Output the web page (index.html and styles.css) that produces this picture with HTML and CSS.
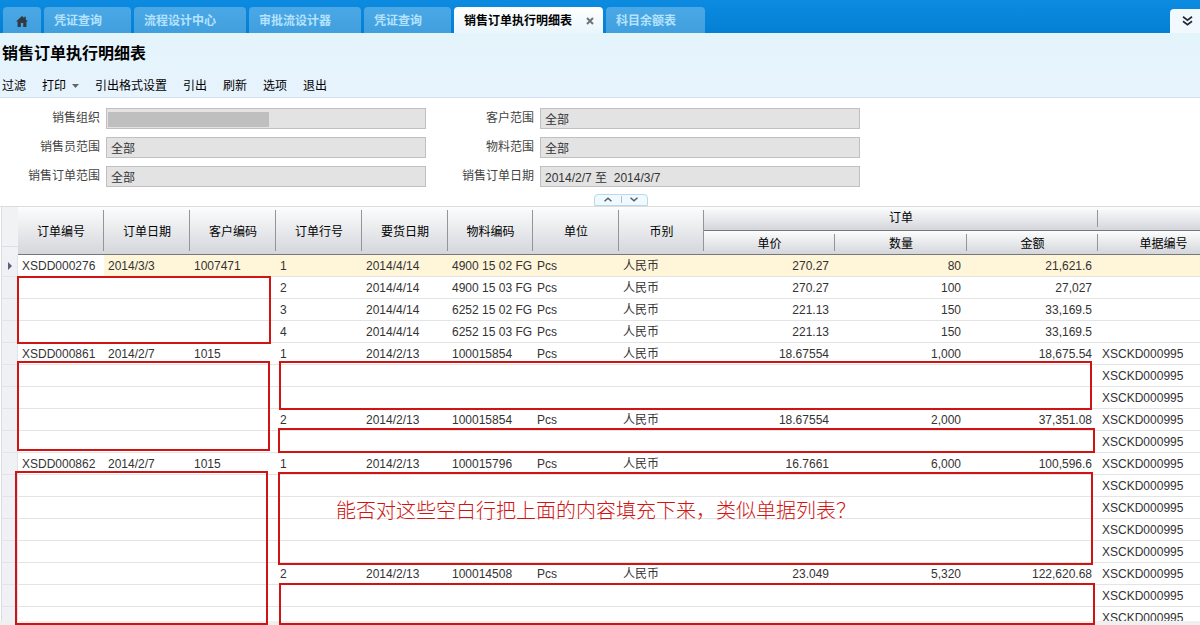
FILE: index.html
```html
<!DOCTYPE html>
<html lang="zh-CN">
<head>
<meta charset="utf-8">
<title>销售订单执行明细表</title>
<link rel="stylesheet" href="styles.css">
</head>
<body>
<nav class="tabs">
  <button class="tab tab-home" aria-label="首页"><svg width="12" height="11" viewBox="0 0 12 11"><path fill="#2f3a45" d="M6 0 0 5.6h1.6V11h3.2V7h2.4v4h3.2V5.6H12L9.8 3.5V.8H8.2V2z"/></svg></button>
  <button class="tab">凭证查询</button>
  <button class="tab tab-wide">流程设计中心</button>
  <button class="tab tab-wide">审批流设计器</button>
  <button class="tab">凭证查询</button>
  <button class="tab tab-active">销售订单执行明细表<svg width="8" height="8" viewBox="0 0 8 8"><path d="M1 1l6 6M7 1l-6 6" stroke="#6e7378" stroke-width="2"/></svg></button>
  <button class="tab">科目余额表</button>
  <button class="expand" aria-label="展开"><svg width="11" height="10" viewBox="0 0 11 10"><path d="M1 .8l4.500 3.400L10 .8M1 5.300l4.500 3.400L10 5.300" fill="none" stroke="#222b33" stroke-width="1.700"/></svg></button>
</nav>
<header class="head">
  <h1 class="title">销售订单执行明细表</h1>
  <div class="toolbar">
    <button class="tool">过滤</button>
    <button class="tool">打印<svg class="caret" width="7" height="4" viewBox="0 0 7 4"><path fill="#666" d="M0 0h7L3.500 4z"/></svg></button>
    <button class="tool">引出格式设置</button>
    <button class="tool">引出</button>
    <button class="tool">刷新</button>
    <button class="tool">选项</button>
    <button class="tool">退出</button>
  </div>
</header>
<form class="filters">
  <label class="label" for="org">销售组织</label>
  <div class="masked"><input class="field" id="org" readonly><span class="mask"></span></div>
  <label class="label" for="customer">客户范围</label>
  <input class="field" id="customer" value="全部" readonly>
  <label class="label" for="seller">销售员范围</label>
  <input class="field" id="seller" value="全部" readonly>
  <label class="label" for="material">物料范围</label>
  <input class="field" id="material" value="全部" readonly>
  <label class="label" for="order">销售订单范围</label>
  <input class="field" id="order" value="全部" readonly>
  <label class="label" for="date">销售订单日期</label>
  <input class="field" id="date" value="2014/2/7 至  2014/3/7" readonly>
</form>
<div class="splitter">
  <div class="handle">
    <button class="fold" aria-label="收起"><svg width="8" height="5" viewBox="0 0 8 5"><path d="M.5 4.300 4 1.200l3.500 3.100" fill="none" stroke="#555d66" stroke-width="1.500"/></svg></button>
    <button class="fold" aria-label="展开"><svg width="8" height="5" viewBox="0 0 8 5"><path d="M.5.700 4 3.800 7.500.7" fill="none" stroke="#555d66" stroke-width="1.500"/></svg></button>
  </div>
</div>
<main class="sheet">
  <div class="viewport">
    <table class="grid">
      <colgroup>
        <col class="w-gutter"><col class="w-std"><col class="w-std"><col class="w-std"><col class="w-std"><col class="w-std"><col class="w-code"><col class="w-std"><col class="w-code"><col class="w-num"><col class="w-qty"><col class="w-num"><col class="w-num">
      </colgroup>
      <thead>
        <tr>
          <th class="corner" rowspan="2"></th>
          <th rowspan="2">订单编号</th><th rowspan="2">订单日期</th><th rowspan="2">客户编码</th><th rowspan="2">订单行号</th><th rowspan="2">要货日期</th><th rowspan="2">物料编码</th><th rowspan="2">单位</th><th rowspan="2">币别</th>
          <th class="group" colspan="3">订单</th><th class="group"></th>
        </tr>
        <tr><th>单价</th><th>数量</th><th>金额</th><th>单据编号</th></tr>
      </thead>
      <tbody>
        <tr class="current"><td class="gutter"><svg width="4" height="8" viewBox="0 0 4 8"><path fill="#5b5f7d" d="M0 0l4 4-4 4z"/></svg></td><td class="focus">XSDD000276</td><td>2014/3/3</td><td>1007471</td><td>1</td><td>2014/4/14</td><td>4900 15 02 FG</td><td>Pcs</td><td>人民币</td><td class="num">270.27</td><td class="num">80</td><td class="num">21,621.6</td><td></td></tr>
        <tr><td class="gutter"></td><td></td><td></td><td></td><td>2</td><td>2014/4/14</td><td>4900 15 03 FG</td><td>Pcs</td><td>人民币</td><td class="num">270.27</td><td class="num">100</td><td class="num">27,027</td><td></td></tr>
        <tr><td class="gutter"></td><td></td><td></td><td></td><td>3</td><td>2014/4/14</td><td>6252 15 02 FG</td><td>Pcs</td><td>人民币</td><td class="num">221.13</td><td class="num">150</td><td class="num">33,169.5</td><td></td></tr>
        <tr><td class="gutter"></td><td></td><td></td><td></td><td>4</td><td>2014/4/14</td><td>6252 15 03 FG</td><td>Pcs</td><td>人民币</td><td class="num">221.13</td><td class="num">150</td><td class="num">33,169.5</td><td></td></tr>
        <tr><td class="gutter"></td><td>XSDD000861</td><td>2014/2/7</td><td>1015</td><td>1</td><td>2014/2/13</td><td>100015854</td><td>Pcs</td><td>人民币</td><td class="num">18.67554</td><td class="num">1,000</td><td class="num">18,675.54</td><td>XSCKD000995</td></tr>
        <tr><td class="gutter"></td><td colspan="11"></td><td>XSCKD000995</td></tr>
        <tr><td class="gutter"></td><td colspan="11"></td><td>XSCKD000995</td></tr>
        <tr><td class="gutter"></td><td></td><td></td><td></td><td>2</td><td>2014/2/13</td><td>100015854</td><td>Pcs</td><td>人民币</td><td class="num">18.67554</td><td class="num">2,000</td><td class="num">37,351.08</td><td>XSCKD000995</td></tr>
        <tr><td class="gutter"></td><td colspan="11"></td><td>XSCKD000995</td></tr>
        <tr><td class="gutter"></td><td>XSDD000862</td><td>2014/2/7</td><td>1015</td><td>1</td><td>2014/2/13</td><td>100015796</td><td>Pcs</td><td>人民币</td><td class="num">16.7661</td><td class="num">6,000</td><td class="num">100,596.6</td><td>XSCKD000995</td></tr>
        <tr><td class="gutter"></td><td colspan="11"></td><td>XSCKD000995</td></tr>
        <tr><td class="gutter"></td><td colspan="11"></td><td>XSCKD000995</td></tr>
        <tr><td class="gutter"></td><td colspan="11"></td><td>XSCKD000995</td></tr>
        <tr><td class="gutter"></td><td colspan="11"></td><td>XSCKD000995</td></tr>
        <tr><td class="gutter"></td><td></td><td></td><td></td><td>2</td><td>2014/2/13</td><td>100014508</td><td>Pcs</td><td>人民币</td><td class="num">23.049</td><td class="num">5,320</td><td class="num">122,620.68</td><td>XSCKD000995</td></tr>
        <tr><td class="gutter"></td><td colspan="11"></td><td>XSCKD000995</td></tr>
        <tr><td class="gutter"></td><td colspan="11"></td><td>XSCKD000995</td></tr>
      </tbody>
    </table>
  </div>
  <div class="scroll-edge"></div>
  <div class="mark mark-a"></div>
  <div class="mark mark-b"></div>
  <div class="mark mark-c"></div>
  <div class="mark mark-d"></div>
  <div class="mark mark-e"></div>
  <div class="mark mark-f"></div>
  <div class="mark mark-g"></div>
  <p class="note">能否对这些空白行把上面的内容填充下来，类似单据列表？</p>
</main>
</body>
</html>
```
FILE: styles.css
```css
* { box-sizing: border-box; }

body {
  margin: 0;
  height: 100vh;
  display: flex;
  flex-direction: column;
  overflow: hidden;
  background: #fff;
  color: #333;
  font: 12px/16px "Liberation Sans", "Noto Sans CJK SC", sans-serif;
}

button {
  border: 0;
  padding: 0;
  background: none;
  font: inherit;
  color: inherit;
  white-space: nowrap;
}

svg { display: block; flex: none; }

/* Tab strip */
.tabs {
  display: flex;
  align-items: flex-end;
  gap: 3px;
  height: 33px;
  padding-left: 3px;
  background: linear-gradient(#0d8be0, #0380d4);
}

.tab {
  display: flex;
  align-items: center;
  height: 26px;
  min-width: 87px;
  padding: 2px 30px 0 10px;
  border-radius: 4px 4px 0 0;
  background: linear-gradient(#4aa8e6, #429fdd);
  color: #b5e3ff;
  font-weight: bold;
}

.tab:not(.tab-wide):not(.tab-home):not(.tab-active) { padding-right: 29px; }

.tab-home {
  min-width: 38px;
  padding: 2px 0 0;
  justify-content: center;
}

.tab-wide { min-width: 112px; }

.tab-active {
  gap: 14px;
  padding-right: 9px;
  background: linear-gradient(#fff, #e9f5fc);
  color: #000;
}

.expand {
  display: flex;
  align-items: center;
  justify-content: center;
  width: 30px;
  height: 24px;
  margin-left: auto;
  padding-left: 4px;
  border-radius: 4px 0 0 0;
  background: #f1f8fe;
}

/* Title and toolbar */
.head {
  padding: 9px 0 2px 2px;
  border-bottom: 1px solid #d2dff0;
  background: linear-gradient(#e4f4fb, #e7f3fd);
  color: #000;
}

.title {
  margin: 0 0 8px;
  font-size: 16px;
  line-height: 24px;
}

.toolbar {
  display: flex;
  gap: 16px;
  height: 21px;
}

.tool {
  display: flex;
  align-items: center;
  gap: 6px;
  padding-top: 2px;
}

/* Filter summary */
.filters {
  display: grid;
  grid-template-columns: 100px 320px 102px 320px;
  gap: 8px 6px;
  padding-top: 10px;
}

.label {
  line-height: 20px;
  text-align: right;
  color: #444;
}

.field {
  display: block;
  width: 100%;
  height: 21px;
  padding: 0 4px;
  border: 1px solid #c0c0c0;
  border-radius: 0;
  background: #e3e3e3;
  color: #333;
  font: inherit;
  white-space: pre;
  outline: 0;
}

.masked { position: relative; }

.mask {
  position: absolute;
  left: 2px;
  top: 4px;
  width: 161px;
  height: 15px;
  background: #bfbfbf;
}

.splitter {
  display: flex;
  justify-content: center;
  padding: 7px 0 0 42px;
}

.handle {
  display: flex;
  width: 54px;
  height: 12px;
  padding: 1px 0 2px;
  border: 1px solid #b9d9ea;
  border-radius: 4px 4px 0 0;
  background: #f0f9fe;
}

.fold {
  flex: 1;
  display: flex;
  align-items: center;
  justify-content: center;
}

.fold + .fold { border-left: 1px solid #b0bfca; }

/* Data grid */
.sheet {
  position: relative;
  flex: 1;
  min-height: 0;
  display: flex;
  flex-direction: column;
  border-top: 1px solid #dcdcdc;
}

.viewport {
  flex: 1;
  min-height: 0;
  overflow: hidden;
  padding-left: 1px;
}

.scroll-edge {
  height: 4px;
  background: #f0f0f1;
}

.grid {
  table-layout: fixed;
  width: 1228px;
  border-spacing: 0;
}

.w-gutter { width: 17px; }
.w-std { width: 86px; }
.w-code { width: 85px; }
.w-num { width: 131px; }
.w-qty { width: 132px; }

.grid th {
  height: 24px;
  padding: 2px 0 0;
  border-bottom: 1px solid #74777c;
  background:
    linear-gradient(#92969c, #92969c) right center / 1px calc(100% - 6px) no-repeat,
    linear-gradient(#fcfdfd, #d4d6db);
  color: #000;
  font-weight: normal;
}

.grid .group { padding: 0 0 2px; }

.grid .corner {
  border-left: 1px solid #d9dde2;
  border-bottom: 0;
  background: linear-gradient(#dcdee2, #dcdee2) left 0 top 39px / 100% 1px no-repeat, #f1f2f4;
}

.grid td {
  height: 22px;
  padding: 1px 0 0 4px;
  border-bottom: 1px solid #e4e4e4;
  line-height: 20px;
  white-space: nowrap;
  overflow: hidden;
}

.grid .num {
  padding-right: 6px;
  text-align: right;
}

.grid .gutter {
  padding-left: 6px;
  border-left: 1px solid #d9dde2;
  border-right: 1px solid #e0e2e8;
  background: #eff1f5;
}

.current td { background: #fff5d9; }
.current .focus { background: #fff; }

/* Annotations drawn over the grid */
.mark {
  position: absolute;
  border: 2px solid #d01414;
}

.mark-a { left: 17px; top: 69px; width: 254px; height: 68px; }
.mark-b { left: 17px; top: 154px; width: 253px; height: 90px; }
.mark-c { left: 15px; top: 264px; width: 253px; height: 154px; }
.mark-d { left: 279px; top: 154px; width: 813px; height: 49px; }
.mark-e { left: 278px; top: 221px; width: 817px; height: 25px; }
.mark-f { left: 278px; top: 265px; width: 815px; height: 93px; }
.mark-g { left: 279px; top: 376px; width: 816px; height: 42px; }

.note {
  position: absolute;
  left: 336px;
  top: 292px;
  margin: 0;
  color: #d01414;
  font-size: 20px;
  font-weight: 300;
  line-height: 24px;
  white-space: nowrap;
}
```
